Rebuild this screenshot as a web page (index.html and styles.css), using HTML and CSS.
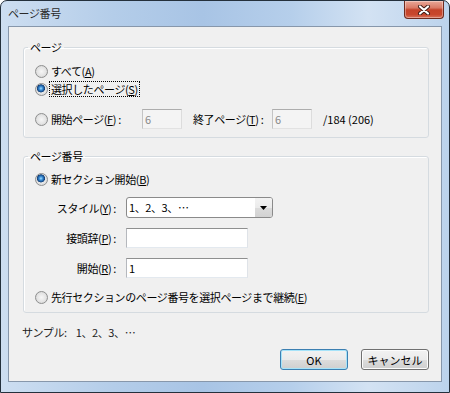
FILE: index.html
```html
<!DOCTYPE html>
<html lang="ja">
<head>
  <meta charset="UTF-8">
  <title>ページ番号</title>
  <link rel="stylesheet" href="styles.css">
</head>
<body>

<div class="window">
  <div class="titlebar">
    <span class="title">ページ番号</span>
    <button class="close-btn">
      <svg width="14" height="10" viewBox="0 0 14 10">
        <path d="M3 1.5 L11 8.5 M11 1.5 L3 8.5" stroke="#3a1a14" stroke-width="4" stroke-linecap="round"/>
        <path d="M3 1.5 L11 8.5 M11 1.5 L3 8.5" stroke="#ffffff" stroke-width="2.2" stroke-linecap="round"/>
      </svg>
    </button>
  </div>

  <div class="client">
    <!-- ページ範囲 -->
    <fieldset class="group group-pages">
      <legend>ページ</legend>
      <div class="opt-row">
        <span class="radio"></span>
        <span class="opt-text">すべて(<u>A</u>)</span>
      </div>
      <div class="opt-row">
        <span class="radio checked"></span>
        <span class="opt-text focus">選択したページ(<u>S</u>)</span>
      </div>
      <div class="range-row">
        <span class="radio"></span>
        <span class="opt-text range-from">開始ページ(<u>F</u>)&nbsp;:</span>
        <input class="field small" type="text" value="6" disabled>
        <span class="range-to">終了ページ(<u>T</u>)&nbsp;:</span>
        <input class="field small" type="text" value="6" disabled>
        <span class="total">/184 (206)</span>
      </div>
    </fieldset>

    <!-- ページ番号 -->
    <fieldset class="group group-numbers">
      <legend>ページ番号</legend>
      <div class="opt-row">
        <span class="radio checked"></span>
        <span class="opt-text">新セクション開始(<u>B</u>)</span>
      </div>
      <div class="field-row combo-row">
        <label class="field-label">スタイル(<u>Y</u>)&nbsp;:</label>
        <div class="combo">
          <span class="combo-text">1、2、3、…</span>
          <span class="combo-btn">
            <svg width="7" height="4" viewBox="0 0 7 4"><path d="M0 0 H7 L3.5 4 Z" fill="#000"/></svg>
          </span>
        </div>
      </div>
      <div class="field-row">
        <label class="field-label">接頭辞(<u>P</u>)&nbsp;:</label>
        <input class="field" type="text" value="">
      </div>
      <div class="field-row">
        <label class="field-label">開始(<u>R</u>)&nbsp;:</label>
        <input class="field" type="text" value="1">
      </div>
      <div class="opt-row last-opt">
        <span class="radio"></span>
        <span class="opt-text">先行セクションのページ番号を選択ページまで継続(<u>E</u>)</span>
      </div>
    </fieldset>

    <div class="sample">サンプル:<span class="sample-value">1、2、3、…</span></div>

    <div class="buttons">
      <button class="btn btn-default">OK</button>
      <button class="btn">キャンセル</button>
    </div>
  </div>
</div>

</body>
</html>
```

FILE: styles.css
```css
body {
  margin: 0;
  font-family: "Noto Sans CJK JP", "Noto Sans", sans-serif;
  font-size: 11px;
  letter-spacing: -0.4px;
  color: #000;
  background: #ffffff;
}

.window {
  width: 450px;
  height: 393px;
  box-sizing: border-box;
  border: 1px solid #24303c;
  border-radius: 7px 7px 0 0;
  background: linear-gradient(to right, #cddef1 0%, #b4cde9 25%, #a8c4e5 45%, #b6cfeb 65%, #d3e2f3 82%, #bcd3ec 100%);
  display: flex;
  flex-direction: column;
  overflow: hidden;
}

.titlebar {
  height: 25px;
  flex: none;
  display: flex;
  justify-content: space-between;
  align-items: flex-start;
  padding: 0 5px 0 7px;
}

.title {
  line-height: 25px;
  color: #2a2a2a;
}

.close-btn {
  width: 40px;
  height: 18px;
  padding: 0;
  border: 1px solid #6e2a1e;
  border-top: none;
  border-radius: 0 0 4px 4px;
  background: linear-gradient(#e9a898 0%, #d97a66 40%, #c4432a 52%, #c8472d 80%, #d9735c 100%);
  box-shadow: inset 0 0 0 1px rgba(255, 255, 255, 0.35);
  display: flex;
  align-items: center;
  justify-content: center;
}

.client {
  flex: none;
  height: 356px;
  box-sizing: border-box;
  margin: 0 7px;
  border: 1px solid #8797ab;
  background: #f0f0f0;
  padding: 12px 12px 0 14px;
}

.group {
  margin: 0;
  border: 1px solid #d5dbe0;
  border-radius: 3px;
  box-shadow: inset 1px 1px 0 #fff;
  padding: 7px 0 8px 0;
  display: flex;
  flex-direction: column;
}

.group legend {
  margin-left: 4px;
  padding: 0 2px;
  line-height: 16px;
}

.group-pages {
  margin-bottom: 10px;
}

.group-numbers {
  padding: 6px 0 6px 0;
}

.opt-row {
  height: 18px;
  display: flex;
  align-items: center;
  padding-left: 11px;
}

.radio {
  width: 13px;
  height: 13px;
  flex: none;
  box-sizing: border-box;
  border: 1px solid #8e8f8f;
  border-radius: 50%;
  margin-right: 2px;
  background: radial-gradient(circle at 50% 50%, #f6f6f6 0, #e4e4e4 55%, #cbcbcb 100%);
}

.radio.checked {
  background:
    radial-gradient(circle at 45% 40%, #a8e2ff 0, #3f94dc 1.6px, #1b5698 3.2px, #143f74 3.8px, transparent 4.3px),
    radial-gradient(circle at 50% 50%, #f6f6f6 0, #e4e4e4 55%, #cbcbcb 100%);
}

.opt-text {
  padding: 0 1px;
  line-height: 14px;
  white-space: nowrap;
}

.opt-text.focus {
  outline: 1px dotted #000;
}

.range-row {
  height: 20px;
  margin-top: 11px;
  display: flex;
  align-items: center;
  padding-left: 11px;
  white-space: nowrap;
}

.range-from {
  width: 92px;
  flex: none;
  box-sizing: border-box;
}

.range-to {
  width: 79px;
  flex: none;
  margin-left: 11px;
}

.total {
  margin-left: 11px;
  letter-spacing: 0;
}

.field {
  box-sizing: border-box;
  width: 122px;
  height: 20px;
  flex: none;
  margin: 0;
  padding: 0 2px;
  font: inherit;
  color: #000;
  background: #fff;
  border: 1px solid;
  border-color: #8e8f8f #dfe3e8 #e3e9ef #b5b8bd;
  border-radius: 0;
  outline: none;
}

.field.small {
  width: 40px;
}

.field:disabled {
  background: #f4f4f4;
  color: #8a8a8a;
  border-color: #adadad #dcdcdc #e2e2e2 #c4c4c4;
}

.field-row {
  height: 20px;
  margin-top: 10px;
  display: flex;
  align-items: center;
}

.combo-row {
  height: 21px;
  margin-top: 9px;
}

.field-label {
  width: 102px;
  flex: none;
  box-sizing: border-box;
  padding-right: 10px;
  text-align: right;
  white-space: nowrap;
}

.last-opt {
  margin-top: 10px;
}

.combo {
  width: 147px;
  height: 21px;
  box-sizing: border-box;
  border: 1px solid #8a8a8a;
  border-radius: 3px;
  background: #fff;
  display: flex;
  align-items: stretch;
  overflow: hidden;
}

.combo-text {
  flex: 1;
  padding-left: 2px;
  line-height: 19px;
}

.combo-btn {
  width: 17px;
  background: linear-gradient(#f3f3f3 0%, #ebebeb 50%, #dcdcdc 50%, #d2d2d2 100%);
  display: flex;
  align-items: center;
  justify-content: center;
}

.sample {
  margin: 11px 0 0 -1px;
  line-height: 16px;
  color: #222;
}

.sample-value {
  margin-left: 9px;
}

.buttons {
  margin-top: 9px;
  display: flex;
  justify-content: flex-end;
  gap: 13px;
}

.btn {
  width: 68px;
  height: 21px;
  padding: 0;
  font: inherit;
  color: #000;
  border: 1px solid #707070;
  border-radius: 3px;
  background: linear-gradient(#f2f2f2 0%, #ebebeb 50%, #dddddd 50%, #cfcfcf 100%);
  box-shadow: inset 0 0 0 1px #fcfcfc;
}

.btn-default {
  border-color: #3c7fb1;
  box-shadow: inset 0 0 0 1px #a6e3f9;
}
```
